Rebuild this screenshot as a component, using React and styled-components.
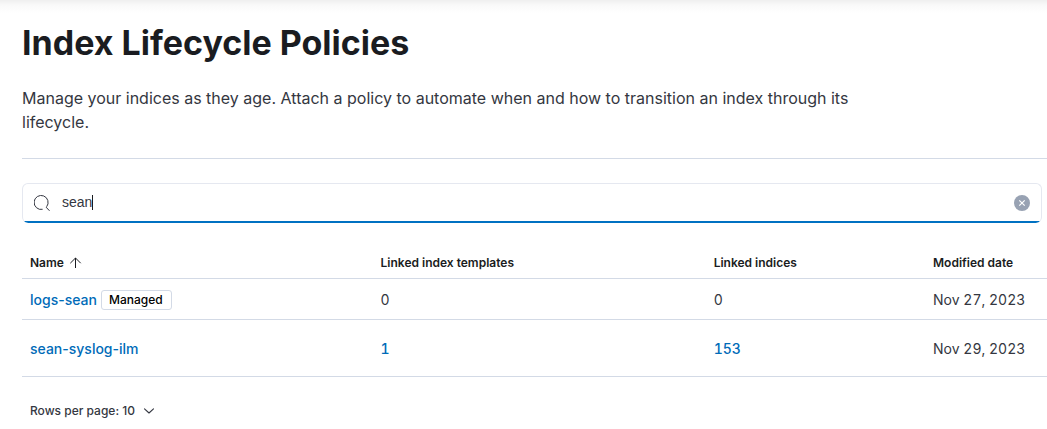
import React, { useState } from "react";
import styled, { createGlobalStyle } from "styled-components";

const GlobalStyle = createGlobalStyle`
  *, *::before, *::after { box-sizing: border-box; }
  body {
    margin: 0;
    background: #fff;
    color: #343741;
    font-family: Inter, "Liberation Sans", sans-serif;
    font-size: 14px;
    line-height: 20px;
  }
`;

const Page = styled.main`
  padding: 23px 0 0 22px;
  background: linear-gradient(#efefef, #f9f9f9 5px, #fff 13px) no-repeat 0 0 / 100% 13px;
`;

const Header = styled.header`
  padding-bottom: 24px;
  border-bottom: 1px solid #d3dae6;
`;

const Title = styled.h1`
  margin: 0 0 23px;
  color: #1a1c21;
  font-size: 34px;
  font-weight: 700;
  line-height: 40px;
`;

const Description = styled.p`
  max-width: 850px;
  margin: 0;
  font-size: 16px;
  line-height: 24px;
`;

const SearchBar = styled.div`
  display: flex;
  align-items: center;
  gap: 12px;
  height: 40px;
  margin: 24px 5px 0 0;
  padding: 0 11px 2px;
  border: 1px solid #e5e8f0;
  border-bottom: 0;
  border-radius: 6px;
  background: linear-gradient(#0071c2, #0071c2) no-repeat 0 100% / 100% 2px;
  color: #343741;
`;

const Field = styled.div`
  position: relative;
  flex: 1;
  display: flex;
  padding-bottom: 2px;
  font-family: "Liberation Sans", Arial, sans-serif;
  font-size: 14px;
  line-height: 20px;
`;

const SearchInput = styled.input`
  width: 100%;
  padding: 0;
  border: 0;
  outline: 0;
  background: transparent;
  color: #343741;
  caret-color: transparent;
  font: inherit;
`;

const Caret = styled.span`
  position: absolute;
  inset: 0 auto 0 0;
  display: flex;
  align-items: center;
  color: transparent;
  pointer-events: none;
  white-space: pre;

  &::before { content: attr(data-value); }
  &::after {
    content: "";
    width: 1px;
    height: 15px;
    background: #1a1c21;
  }
`;

const ClearButton = styled.button`
  display: grid;
  place-items: center;
  width: 16px;
  height: 16px;
  padding: 0;
  border: 0;
  border-radius: 50%;
  background: #98a2b3;
  color: #fff;
`;

const Table = styled.table`
  width: 100%;
  margin-top: 24px;
  border-collapse: collapse;
  table-layout: fixed;
  text-align: left;
`;

const Col = styled.col`
  width: ${({ $width }) => $width};
`;

const HeadCell = styled.th`
  height: 31px;
  padding: 2px 8px 0;
  border-bottom: 1px solid #d3dae6;
  color: #1a1c21;
  font-size: 12px;
  font-weight: 600;
  line-height: 16px;
`;

const SortButton = styled.button`
  display: flex;
  align-items: center;
  gap: 4px;
  padding: 0;
  border: 0;
  background: none;
  color: inherit;
  font: inherit;
`;

const Row = styled.tr`
  height: ${({ $tall }) => ($tall ? 57 : 41)}px;
`;

const Cell = styled.td`
  padding: 2px 8px 0;
  border-bottom: 1px solid #d3dae6;
  font-variant-numeric: ${({ $numeric }) => ($numeric ? "tabular-nums" : "normal")};
`;

const NameGroup = styled.div`
  display: flex;
  align-items: center;
  gap: 4px;
`;

const Link = styled.a`
  color: #006bb8;
  font-weight: 500;
  text-decoration: none;
`;

const Badge = styled.span`
  padding: 0 8px 0 7px;
  border: 1px solid #d3dae6;
  border-radius: 3px;
  color: #000;
  font-size: 12px;
  font-weight: 500;
  line-height: 18px;
`;

const PageSizeButton = styled.button`
  display: flex;
  align-items: center;
  gap: 8px;
  margin-top: 24px;
  padding: 0 8px;
  border: 0;
  background: none;
  color: #343741;
  font: inherit;
  font-size: 12px;
  font-weight: 500;
`;

const SearchIcon = () => (
  <svg width="16" height="16" viewBox="0 0 16 16" fill="none" stroke="currentColor" aria-hidden="true">
    <path d="M8.6 14.3A7 7 0 1 1 12.6 11.8" />
    <path d="M12 12.1 15.5 15.8" />
  </svg>
);

const ClearIcon = () => (
  <svg width="16" height="16" viewBox="0 0 16 16" fill="none" stroke="currentColor" strokeWidth="1.2" aria-hidden="true">
    <path d="m5.3 5.3 5.4 5.4m0-5.4-5.4 5.4" />
  </svg>
);

const SortIcon = () => (
  <svg width="16" height="16" viewBox="0 0 16 16" fill="none" stroke="currentColor" aria-hidden="true">
    <path d="M7.5 13V3M2.3 8.2l5.2-5.2 5.2 5.2" />
  </svg>
);

const ChevronIcon = () => (
  <svg width="12" height="12" viewBox="0 0 12 12" fill="none" stroke="currentColor" strokeWidth="1.1" strokeLinecap="round" strokeLinejoin="round" aria-hidden="true">
    <path d="m1.5 3.8 4.5 4.2 4.5-4.2" />
  </svg>
);

const policies = [
  { name: "logs-sean", managed: true, templates: 0, indices: 0, modified: "Nov 27, 2023" },
  { name: "sean-syslog-ilm", managed: false, templates: 1, indices: 153, modified: "Nov 29, 2023" },
];

const Count = ({ value }) => (value > 0 ? <Link href="#">{value}</Link> : value);

export default function App() {
  const [query, setQuery] = useState("sean");
  const visible = policies.filter((policy) => policy.name.includes(query));

  return (
    <>
      <GlobalStyle />
      <Page>
        <Header>
          <Title>Index Lifecycle Policies</Title>
          <Description>
            Manage your indices as they age. Attach a policy to automate when and how to transition an index through its
            lifecycle.
          </Description>
        </Header>

        <SearchBar role="search">
          <SearchIcon />
          <Field>
            <SearchInput
              type="text"
              aria-label="Search policies"
              value={query}
              onChange={(event) => setQuery(event.target.value)}
            />
            <Caret data-value={query} aria-hidden="true" />
          </Field>
          <ClearButton type="button" aria-label="Clear search" onClick={() => setQuery("")}>
            <ClearIcon />
          </ClearButton>
        </SearchBar>

        <Table>
          <colgroup>
            <Col $width="34.2%" />
            <Col $width="32.5%" />
            <Col $width="21.4%" />
            <Col $width="11.9%" />
          </colgroup>
          <thead>
            <tr>
              <HeadCell scope="col" aria-sort="ascending">
                <SortButton type="button">
                  Name
                  <SortIcon />
                </SortButton>
              </HeadCell>
              <HeadCell scope="col">Linked index templates</HeadCell>
              <HeadCell scope="col">Linked indices</HeadCell>
              <HeadCell scope="col">Modified date</HeadCell>
            </tr>
          </thead>
          <tbody>
            {visible.map((policy) => (
              <Row key={policy.name} $tall={!policy.managed}>
                <Cell>
                  <NameGroup>
                    <Link href="#">{policy.name}</Link>
                    {policy.managed && <Badge>Managed</Badge>}
                  </NameGroup>
                </Cell>
                <Cell $numeric><Count value={policy.templates} /></Cell>
                <Cell $numeric><Count value={policy.indices} /></Cell>
                <Cell $numeric>{policy.modified}</Cell>
              </Row>
            ))}
          </tbody>
        </Table>

        <PageSizeButton type="button" aria-haspopup="true">
          Rows per page: 10
          <ChevronIcon />
        </PageSizeButton>
      </Page>
    </>
  );
}
